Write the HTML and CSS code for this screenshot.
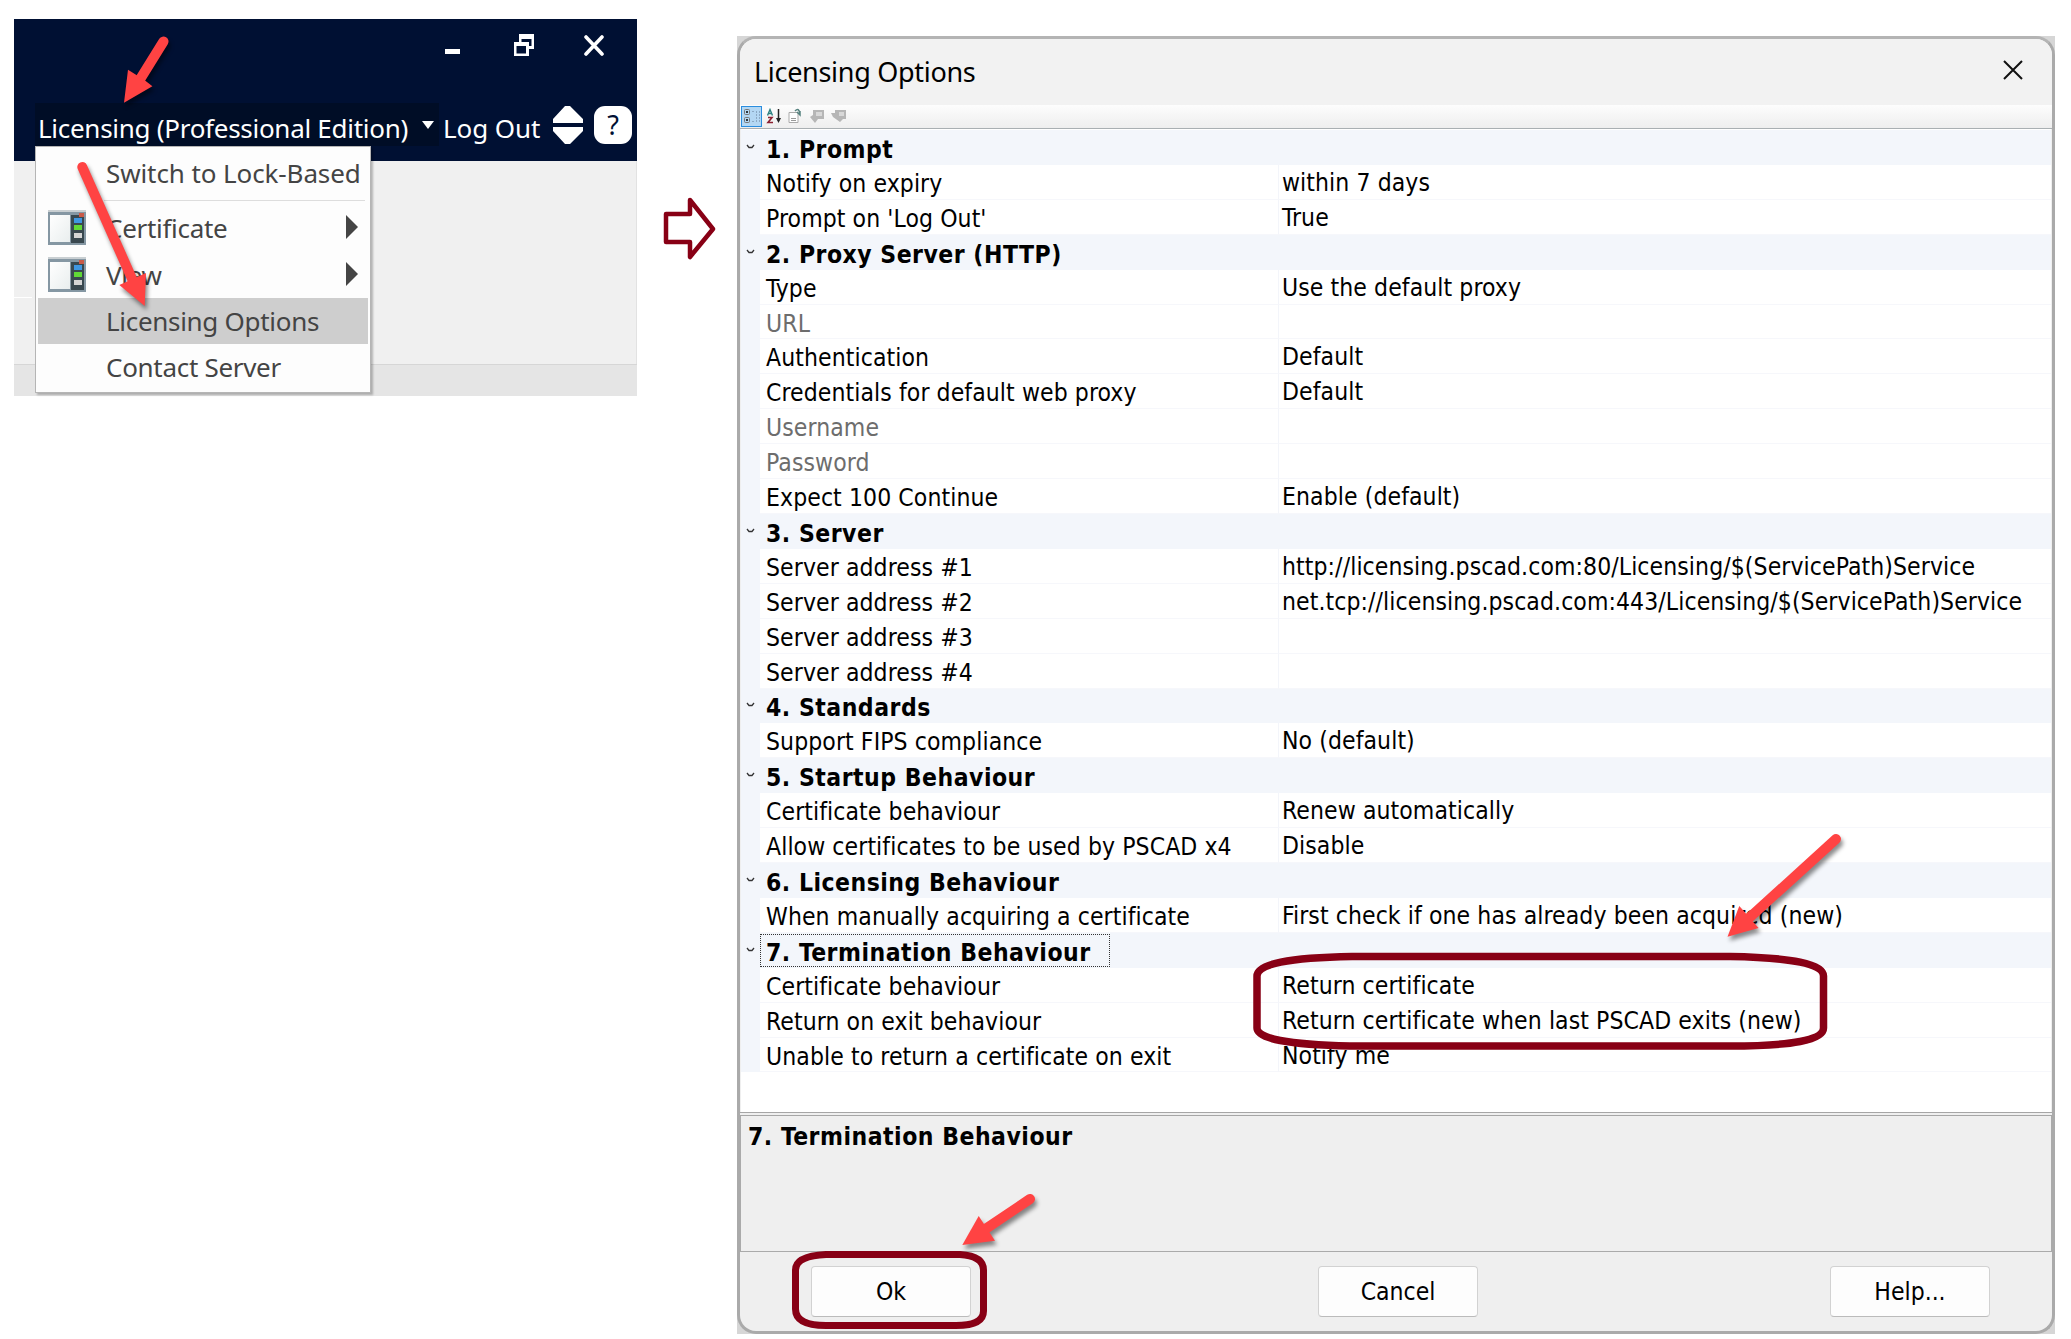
FILE: index.html
```html
<!DOCTYPE html>
<html lang="en">
<head>
	<meta charset="UTF-8">
	<title>Licensing Options</title>
	<link rel="stylesheet" href="styles.css">
</head>
<body>
	<div class="app">
		<div class="head">
			<div class="controls">
				<svg width="16" height="22"><rect y="15" width="15" height="5" fill="#fff"/></svg>
				<svg width="20" height="22"><path d="M5 0h15v15h-5v7H0V8h5zM7.500 5v3H15v4h2.500V5zM2.500 12v7.500h9.500V12z" fill="#fff" fill-rule="evenodd"/></svg>
				<svg width="20" height="22"><path d="M2 3l16 17M18 3L2 20" stroke="#fff" stroke-width="3.600" stroke-linecap="round"/></svg>
			</div>
			<div class="bar">
				<div class="licensing"><span>Licensing (Professional Edition)</span><svg width="12" height="8"><path d="M0 0h12L6 8z" fill="#fff"/></svg></div>
				<span class="logout">Log Out</span>
				<svg class="updown" width="30" height="38"><path d="M12 0h5l13 13v4H0v-4zM0 21h30v4L17 38h-5L0 25z" fill="#fff"/></svg>
				<div class="help">?</div>
			</div>
		</div>
		<div class="body"></div>
		<div class="foot"></div>
		<div class="menu">
			<div class="item first">Switch to Lock-Based</div>
			<div class="line"></div>
			<div class="item"><svg class="ico" width="38" height="35"><use href="#panel"/></svg>Certificate<svg class="sub" width="12" height="24"><path d="M0 0l12 12L0 24z" fill="#444"/></svg></div>
			<div class="item"><svg class="ico" width="38" height="35"><use href="#panel"/></svg>View<svg class="sub" width="12" height="24"><path d="M0 0l12 12L0 24z" fill="#444"/></svg></div>
			<div class="item active">Licensing Options</div>
			<div class="item">Contact Server</div>
		</div>
	</div>

	<svg class="next" width="54" height="64"><path d="M4 17h24V3l23 29-23 28V45H4z" fill="#fff" stroke="#880015" stroke-width="4.500" stroke-linejoin="round"/></svg>

	<div class="frame">
		<div class="dialog">
			<div class="title">
				<h1>Licensing Options</h1>
				<svg width="20" height="20"><path d="M1 1l18 18M19 1L1 19" stroke="#111" stroke-width="2"/></svg>
			</div>
			<div class="tools">
				<svg width="108" height="22">
					<rect x=".5" y=".5" width="20" height="20" fill="#b3d7f3" stroke="#2a8dde"/>
					<g fill="none" stroke="#777"><rect x="3.500" y="3.500" width="5" height="5" rx="1"/><rect x="3.500" y="11.500" width="5" height="5" rx="1"/><path d="M11 5.500h3M11 15.500h3M15.500 5v11M18.500 5v11" stroke="#8ba9c4" stroke-dasharray="2 1"/></g>
					<path d="M5 6h2M6 5v2M5 14h2M6 13v2" stroke="#000"/>
					<path d="M26.500 9.500l2.500-6 2.500 6M27.500 7.500h3" fill="none" stroke="#2b8080" stroke-width="1.400"/>
					<path d="M27 11.500h4l-4 5h5" fill="none" stroke="#8b2030" stroke-width="1.600"/>
					<path d="M37.500 3v12" stroke="#222" stroke-width="1.500"/><path d="M35 12h5l-2.500 5z" fill="#222"/>
					<path d="M48 6.500h9v10H48z" fill="#fff" stroke="#aaa"/><path d="M50 12.500h5M50 14.500h5" stroke="#999"/><path d="M54 5q4-4 5 3M56 6l3 3v-4" fill="none" stroke="#56827f" stroke-width="1.500"/>
					<g fill="#b6b6b6"><path d="M72 4h11v9h-6l-3 4-5-6 3-2z"/><path d="M94 4h11v9h-3l-3 3-7-5-2-4h4z"/></g>
					<path d="M75 6h6v4h-6zM98 6h5v4h-5z" fill="#d8d8d8"/>
				</svg>
			</div>
			<div class="grid"></div>
			<div class="gap"></div>
			<div class="info">7. Termination Behaviour</div>
			<div class="buttons">
				<button>Ok</button>
				<button class="cancel">Cancel</button>
				<button>Help...</button>
			</div>
		</div>
	</div>

	<svg class="marks" width="2071" height="1339">
		<defs>
			<linearGradient id="pane" x2="1" y2="1"><stop stop-color="#fff"/><stop offset="1" stop-color="#e9eeee"/></linearGradient>
			<g id="panel">
				<rect width="38" height="35" fill="#8597a3"/>
				<rect width="38" height="2" fill="#c9cfd2"/>
				<rect x="2" y="5" width="20" height="27" fill="url(#pane)"/>
				<rect x="23" y="5" width="13" height="28" fill="#39484f"/>
				<rect x="31" y="3" width="5" height="4" fill="#c95a48"/>
				<rect x="26" y="8" width="8" height="5" fill="#3f96e0"/>
				<rect x="26" y="15" width="8" height="5" fill="#61d836"/>
				<rect x="26" y="23" width="8" height="5" fill="#d5d5d5"/>
			</g>
		</defs>
		<g fill="none" stroke="#880015">
			<path d="M1352 956.500H1730Q1823.500 958 1823.500 976V1028Q1823.500 1046 1730 1046H1350Q1257 1044 1257 1028V976Q1257 958 1352 956.500z" stroke-width="7.500"/>
			<path d="M826 1254.500H960Q983.500 1256 983.500 1270V1311Q983.500 1325.500 956 1325.500H826Q795.500 1325.500 795.500 1309V1270Q795.500 1256 826 1254.500z" stroke-width="7"/>
		</g>
		<g class="arrows">
			<path d="M163.500 41.500L139 81"/><path class="tip" d="M124 102.700L128 69.700 136.800 75.300 144.400 80 152.400 86.300z"/>
			<path d="M82.300 167L133 281"/><path class="tip" d="M144.700 306L119.300 285 146 273z"/>
			<path d="M1836 839L1748 919"/><path class="tip" d="M1727.500 936.700L1739.300 906 1758.600 928z"/>
			<path d="M1030 1199L984 1230"/><path class="tip" d="M962.300 1245L978.700 1216 995 1240.700z"/>
		</g>
	</svg>
	<script>
		const options = [
			['1. Prompt', [['Notify on expiry', 'within 7 days'], ['Prompt on \'Log Out\'', 'True']]],
			['2. Proxy Server (HTTP)', [
				['Type', 'Use the default proxy'],
				['URL', '', true],
				['Authentication', 'Default'],
				['Credentials for default web proxy', 'Default'],
				['Username', '', true],
				['Password', '', true],
				['Expect 100 Continue', 'Enable (default)']
			]],
			['3. Server', [
				['Server address #1', 'http://licensing.pscad.com:80/Licensing/$(ServicePath)Service'],
				['Server address #2', 'net.tcp://licensing.pscad.com:443/Licensing/$(ServicePath)Service'],
				['Server address #3', ''],
				['Server address #4', '']
			]],
			['4. Standards', [['Support FIPS compliance', 'No (default)']]],
			['5. Startup Behaviour', [['Certificate behaviour', 'Renew automatically'], ['Allow certificates to be used by PSCAD x4', 'Disable']]],
			['6. Licensing Behaviour', [['When manually acquiring a certificate', 'First check if one has already been acquired (new)']]],
			['7. Termination Behaviour', [
				['Certificate behaviour', 'Return certificate'],
				['Return on exit behaviour', 'Return certificate when last PSCAD exits (new)'],
				['Unable to return a certificate on exit', 'Notify me']
			]]
		];
		const chevron = '<svg width="9" height="6"><path d="M1 1l2 2.500h3L8 1" fill="none" stroke="#333" stroke-width="1.300"/></svg>';
		let rows = '';
		options.forEach(([name, items], i) => {
			rows += `<div class="row category">${chevron}<b class="${i == 6 ? 'focus' : ''}">${name}</b></div>`;
			items.forEach(([label, value, off]) => {
				rows += `<div class="row"><span class="label ${off ? 'off' : ''}">${label}</span><span class="value">${value}</span></div>`;
			});
		});
		document.querySelector('.grid').innerHTML = rows;
	</script>
</body>
</html>
```
FILE: styles.css
```css
* { margin: 0; padding: 0; box-sizing: border-box; }
body {
	width: 2071px;
	height: 1339px;
	background: #fff;
	display: flex;
	align-items: flex-start;
	position: relative;
	overflow: hidden;
	font-family: 'Noto Sans', sans-serif;
}
svg { display: block; flex: none; }
.app {
	width: 623px;
	height: 377px;
	margin: 19px 0 0 14px;
	position: relative;
	flex: none;
}
.app .head {
	height: 142px;
	background: #001033;
	color: #fff;
}
.app .controls {
	display: flex;
	justify-content: flex-end;
	column-gap: 50px;
	height: 84px;
	padding: 15px 33px 0 0;
}
.app .controls svg:first-child { margin-right: 3px; }
.app .bar {
	display: flex;
	height: 43px;
	padding-left: 21px;
	font-size: 26px;
	line-height: 51px;
	white-space: nowrap;
}
.app .licensing {
	width: 404px;
	padding-left: 3px;
	background: #000d26;
	display: flex;
	letter-spacing: -.28px;
}
.app .licensing span { width: 384px; }
.app .licensing svg { margin-top: 18px; }
.app .logout {
	width: 114px;
	padding-left: 4px;
	letter-spacing: -.1px;
}
.app .updown { margin-top: 3px; }
.app .help {
	width: 38px;
	height: 38px;
	margin: 3px 0 0 11px;
	background: #fff;
	border-radius: 11px;
	color: #001033;
	font-size: 27px;
	line-height: 38px;
	text-align: center;
}
.app .body {
	height: 203px;
	background: #f0f0f0 linear-gradient(#fff, #fff) no-repeat 0 136px / 18px 1px;
	border-right: 1px solid #e2e2e2;
}
.app .foot {
	height: 32px;
	background: #e5e5e5;
	border-top: 1px solid #d6d6d6;
}
.menu {
	position: absolute;
	left: 21px;
	top: 127px;
	width: 336px;
	height: 247px;
	padding: 4px 2px;
	background: #fdfdfd;
	border: 1px solid #b5b5b5;
	box-shadow: 2px 2px 2px rgba(0,0,0,.25);
	color: #444;
	font-size: 26px;
}
.menu .item {
	height: 46.300px;
	padding-left: 68px;
	line-height: 47px;
	letter-spacing: -.3px;
	white-space: nowrap;
	position: relative;
}
.menu .first {
	line-height: 44px;
	letter-spacing: -.1px;
}
.menu .active { background: #cecece; }
.menu .line {
	height: 1px;
	margin: 3px 3px 4px 66px;
	background: #ddd;
}
.menu .ico {
	position: absolute;
	left: 10px;
	top: 5px;
}
.menu .sub {
	position: absolute;
	right: 10px;
	top: 10px;
}
.next { margin: 197px 0 0 25px; }
.frame {
	width: 1318px;
	height: 1298px;
	margin: 36px 0 0 21px;
	background: #d6d6d6;
	flex: none;
}
.dialog {
	height: 100%;
	background: #efefef;
	border: 3px solid #aaa;
	border-top-color: #b4b4b4;
	border-radius: 19px;
	overflow: hidden;
	font-family: 'DejaVu Sans Condensed', 'DejaVu Sans', sans-serif;
	font-stretch: condensed;
	font-size: 24.500px;
	color: #000;
}
.title {
	height: 66px;
	padding: 0 29px 0 14px;
	background: #f2f2f2;
	display: flex;
	align-items: center;
	justify-content: space-between;
}
.title h1 {
	margin-bottom: 2px;
	font: 27px 'Noto Sans', sans-serif;
	letter-spacing: -.3px;
}
.title svg { margin-bottom: 4px; }
.tools {
	height: 24px;
	padding: 1px 0 0 1px;
	background: linear-gradient(#fdfdfd, #eee);
	border-bottom: 1px solid #a9afb2;
}
.grid {
	height: 983px;
	margin: 0 1px;
	padding-top: 1px;
	background: #fff;
}
.row {
	height: 34.910px;
	display: flex;
	border-left: 19px solid #f3f6fb;
	line-height: 38px;
	letter-spacing: .09px;
	white-space: nowrap;
}
.row .label {
	width: 519px;
	padding-left: 6px;
	border-bottom: 1px solid #f6f7fb;
	border-right: 1px solid #f3f5fa;
}
.row .off { color: #6d6d6d; }
.row .value {
	flex: 1;
	padding-left: 3px;
	border-bottom: 1px solid #f6f7fb;
	line-height: 36px;
}
.category {
	background: #f3f6fb;
	border-left: 0;
	align-items: center;
}
.category svg { margin: 0 5px 1px 5px; }
.category b {
	height: 33px;
	padding: 0 18px 0 5px;
	border: 1px solid transparent;
	line-height: 35px;
	letter-spacing: .5px;
}
.category .focus { border: 1px dotted #333; }
.gap {
	height: 4px;
	border: 1px solid #a6a6a6;
	border-width: 1px 0;
}
.info {
	height: 136px;
	padding: 6px 7px;
	border: 1px solid #aaa;
	border-top: 0;
	font-weight: bold;
	letter-spacing: .5px;
}
.buttons {
	display: flex;
	justify-content: space-between;
	padding: 14px 62px 0 71px;
}
.buttons button {
	width: 160px;
	height: 51px;
	background: #fdfdfd;
	border: 1px solid #d2d2d2;
	border-bottom-color: #bbb;
	border-radius: 4px;
	font: inherit;
}
.buttons .cancel { margin-right: 5px; }
.marks {
	position: absolute;
	left: 0;
	top: 0;
}
.arrows {
	fill: none;
	stroke: #ff4343;
	stroke-width: 10;
	stroke-linecap: round;
	filter: drop-shadow(2px 4px 2px rgba(0,0,0,.45));
}
.arrows .tip {
	fill: #ff4343;
	stroke: none;
}
```
